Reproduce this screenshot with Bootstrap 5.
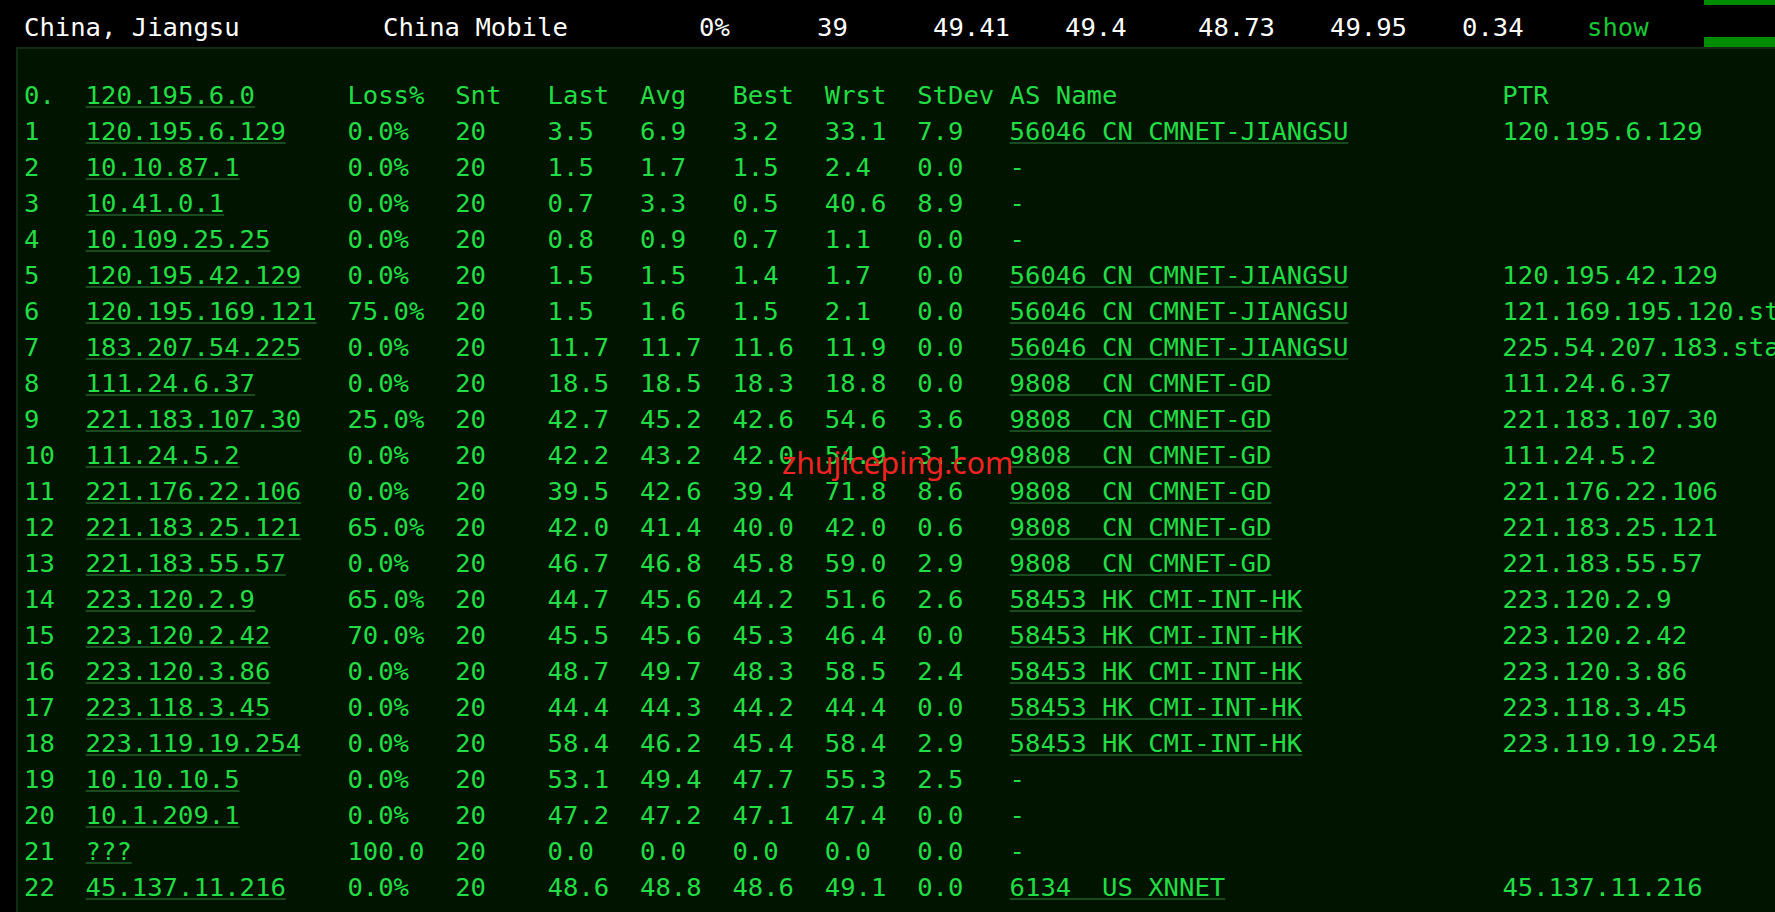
<!DOCTYPE html>
<html lang="en">
<head>
<meta charset="utf-8">
<title>Traceroute</title>
<link href="https://cdn.jsdelivr.net/npm/bootstrap@5.3.0/dist/css/bootstrap.min.css" rel="stylesheet">
<style>
html, body { height: 100%; }
body { background: #000; overflow: hidden; font-family: "DejaVu Sans Mono", monospace; font-size: 25.58px; line-height: 36px; color: #fff; }
.screen { height: 912px; width: 1775px; overflow: hidden; }
.summary { height: 47px; padding-left: 24px; }
.summary > span { white-space: pre; padding-top: 9px; }
.c1 { width: 359px; } .c2 { width: 316px; } .c3 { width: 118px; } .c4 { width: 116px; }
.c5 { width: 132px; } .c6 { width: 133px; } .c7 { width: 132px; } .c8 { width: 132px; } .c9 { width: 125px; }
.c10 { width: 117px; color: #17c733; }
.meter { flex: 1 1 auto; border-top: 5px solid #008c00; border-bottom: 10px solid #008c00; }
.trace { flex: 1 1 auto; margin: 0 0 0 16px; padding: 28px 0 0 6px; background: #001400; border: 2px solid #132a13; border-width: 2px 0 0 2px; color: #22dd44; font: inherit; overflow: hidden; white-space: pre; }
.trace a { color: inherit; text-decoration: underline; text-decoration-color: #1a4a1f; text-decoration-thickness: 2px; text-decoration-skip-ink: none; text-underline-offset: 2px; }
.stamp { position: absolute; left: 782px; top: 445px; color: #f42323; font-family: "Noto Sans", sans-serif; font-size: 30.2px; line-height: 36px; }
</style>
</head>
<body>
<div class="screen d-flex flex-column position-relative">
<div class="summary d-flex flex-shrink-0">
<span class="c1">China, Jiangsu</span><span class="c2">China Mobile</span><span class="c3">0%</span><span class="c4">39</span><span class="c5">49.41</span><span class="c6">49.4</span><span class="c7">48.73</span><span class="c8">49.95</span><span class="c9">0.34</span><span class="c10">show</span><div class="meter"></div>
</div>
<pre class="trace">0.  <a href="#">120.195.6.0</a>      Loss%  Snt   Last  Avg   Best  Wrst  StDev AS Name                         PTR
1   <a href="#">120.195.6.129</a>    0.0%   20    3.5   6.9   3.2   33.1  7.9   <a href="#">56046 CN CMNET-JIANGSU</a>          120.195.6.129
2   <a href="#">10.10.87.1</a>       0.0%   20    1.5   1.7   1.5   2.4   0.0   -
3   <a href="#">10.41.0.1</a>        0.0%   20    0.7   3.3   0.5   40.6  8.9   -
4   <a href="#">10.109.25.25</a>     0.0%   20    0.8   0.9   0.7   1.1   0.0   -
5   <a href="#">120.195.42.129</a>   0.0%   20    1.5   1.5   1.4   1.7   0.0   <a href="#">56046 CN CMNET-JIANGSU</a>          120.195.42.129
6   <a href="#">120.195.169.121</a>  75.0%  20    1.5   1.6   1.5   2.1   0.0   <a href="#">56046 CN CMNET-JIANGSU</a>          121.169.195.120.static.js.chinamobile.com
7   <a href="#">183.207.54.225</a>   0.0%   20    11.7  11.7  11.6  11.9  0.0   <a href="#">56046 CN CMNET-JIANGSU</a>          225.54.207.183.static.js.chinamobile.com
8   <a href="#">111.24.6.37</a>      0.0%   20    18.5  18.5  18.3  18.8  0.0   <a href="#">9808  CN CMNET-GD</a>               111.24.6.37
9   <a href="#">221.183.107.30</a>   25.0%  20    42.7  45.2  42.6  54.6  3.6   <a href="#">9808  CN CMNET-GD</a>               221.183.107.30
10  <a href="#">111.24.5.2</a>       0.0%   20    42.2  43.2  42.0  54.9  3.1   <a href="#">9808  CN CMNET-GD</a>               111.24.5.2
11  <a href="#">221.176.22.106</a>   0.0%   20    39.5  42.6  39.4  71.8  8.6   <a href="#">9808  CN CMNET-GD</a>               221.176.22.106
12  <a href="#">221.183.25.121</a>   65.0%  20    42.0  41.4  40.0  42.0  0.6   <a href="#">9808  CN CMNET-GD</a>               221.183.25.121
13  <a href="#">221.183.55.57</a>    0.0%   20    46.7  46.8  45.8  59.0  2.9   <a href="#">9808  CN CMNET-GD</a>               221.183.55.57
14  <a href="#">223.120.2.9</a>      65.0%  20    44.7  45.6  44.2  51.6  2.6   <a href="#">58453 HK CMI-INT-HK</a>             223.120.2.9
15  <a href="#">223.120.2.42</a>     70.0%  20    45.5  45.6  45.3  46.4  0.0   <a href="#">58453 HK CMI-INT-HK</a>             223.120.2.42
16  <a href="#">223.120.3.86</a>     0.0%   20    48.7  49.7  48.3  58.5  2.4   <a href="#">58453 HK CMI-INT-HK</a>             223.120.3.86
17  <a href="#">223.118.3.45</a>     0.0%   20    44.4  44.3  44.2  44.4  0.0   <a href="#">58453 HK CMI-INT-HK</a>             223.118.3.45
18  <a href="#">223.119.19.254</a>   0.0%   20    58.4  46.2  45.4  58.4  2.9   <a href="#">58453 HK CMI-INT-HK</a>             223.119.19.254
19  <a href="#">10.10.10.5</a>       0.0%   20    53.1  49.4  47.7  55.3  2.5   -
20  <a href="#">10.1.209.1</a>       0.0%   20    47.2  47.2  47.1  47.4  0.0   -
21  <a href="#">???</a>              100.0  20    0.0   0.0   0.0   0.0   0.0   -
22  <a href="#">45.137.11.216</a>    0.0%   20    48.6  48.8  48.6  49.1  0.0   <a href="#">6134  US XNNET</a>                  45.137.11.216</pre>
<span class="stamp">zhujiceping.com</span>
</div>
<script src="https://cdn.jsdelivr.net/npm/bootstrap@5.3.0/dist/js/bootstrap.bundle.min.js"></script>
</body>
</html>
